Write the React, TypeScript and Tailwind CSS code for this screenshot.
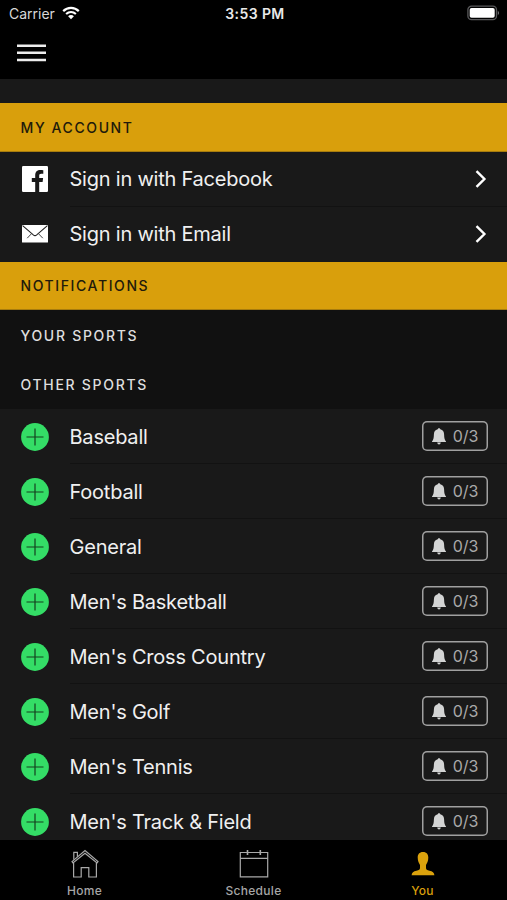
import { ReactNode } from "react";

const sports = [
  "Baseball",
  "Football",
  "General",
  "Men's Basketball",
  "Men's Cross Country",
  "Men's Golf",
  "Men's Tennis",
  "Men's Track & Field",
];

const WifiIcon = () => (
  <svg width="18" height="14" viewBox="0 0 18 14" fill="none">
    <path d="M1.2 5.1C5.6 .7 12.4 .7 16.8 5.1" stroke="#fff" strokeWidth="2.2" />
    <path d="M4.1 8.1C7 5.4 11 5.4 13.9 8.1" stroke="#fff" strokeWidth="2.1" />
    <path d="M6.1 10.3C7.7 8.7 10.3 8.7 11.9 10.3L9 13.2Z" fill="#fff" />
  </svg>
);

const BatteryIcon = () => (
  <svg width="33" height="16" viewBox="0 0 33 16" fill="none">
    <rect x=".9" y="1.2" width="28.6" height="13.4" rx="3.6" stroke="#58585a" strokeWidth="1.3" />
    <rect x="2.7" y="3" width="25" height="9.8" rx="1.8" fill="#fff" />
    <path d="M30.8 5.7C32.4 6.5 32.4 9.3 30.8 10.1Z" fill="#77777a" />
  </svg>
);

const MenuIcon = () => (
  <svg width="29" height="18" viewBox="0 0 29 18" stroke="#ededed" strokeWidth="2.5">
    <path d="M0 1.7H29M0 8.8H29M0 16H29" />
  </svg>
);

const FacebookIcon = () => (
  <svg width="28" height="28" viewBox="0 0 28 28">
    <rect x="1" y="1" width="26" height="26" rx="1.2" fill="#fff" />
    <path
      d="M14.2 27V17H10.8V13.1H14.2V10.2C14.2 6.8 16.3 5 19.3 5C20.7 5 21.8 5.1 22.3 5.2V8.7H20.2C18.5 8.7 18.2 9.5 18.2 10.7V13.1H22.1L21.6 17H18.2V27Z"
      fill="#191919"
    />
  </svg>
);

const MailIcon = () => (
  <svg width="28" height="20" viewBox="0 0 28 20" fill="none">
    <rect x="1" y="1" width="26" height="17.6" rx=".6" fill="#fff" />
    <path d="M1.6 1.6L12.3 10.9Q14 12.3 15.7 10.9L26.4 1.6" stroke="#222" strokeWidth="1.1" />
    <path d="M6.2 14.2L10.4 9.8M21.8 14.2L17.6 9.8" stroke="#444" strokeWidth="1" />
  </svg>
);

const ChevronIcon = () => (
  <svg width="13" height="18" viewBox="0 0 13 18" fill="none">
    <path d="M1.5 1.2L9.4 9L1.5 16.8" stroke="#fff" strokeWidth="2.4" />
  </svg>
);

const AddIcon = () => (
  <svg width="28" height="28" viewBox="0 0 28 28" fill="none">
    <circle cx="14" cy="14" r="13.9" fill="#34dd66" />
    <path d="M14 5.5V22.5M5.5 14H22.5" stroke="#14401f" strokeWidth="1.2" />
  </svg>
);

const BellIcon = () => (
  <svg width="14" height="17" viewBox="0 0 14 17" fill="#d3d4d4">
    <path d="M7 .2C7.8 .2 8.2 .7 8.3 1.3C10.9 1.9 12 3.9 12.1 6.4C12.2 10.2 12.6 11.7 14 13.5V14H0V13.5C1.4 11.7 1.8 10.2 1.9 6.4C2 3.9 3.1 1.9 5.7 1.3C5.8 .7 6.2 .2 7 .2Z" />
    <path d="M5.2 14.6H8.8C8.6 15.9 7.9 16.5 7 16.5C6.1 16.5 5.4 15.9 5.2 14.6Z" />
  </svg>
);

const HomeIcon = () => (
  <svg width="28" height="30" viewBox="0 0 28 30" fill="none" stroke="#a9a9a9" strokeWidth="1.2">
    <path d="M2.6 14V28H10.2V18.6H17.8V28H25.4V14" />
    <path d="M1 12.6L14 1.6L27 12.6L26 13.9L14 4.3L2 13.9Z" />
    <path d="M2.8 10.7V3.4H6.4V7.8" />
  </svg>
);

const CalendarIcon = () => (
  <svg width="30" height="30" viewBox="0 0 30 30" fill="none" stroke="#a9a9a9" strokeWidth="1.2">
    <path d="M1.3 3.5H28.7V27.9H1.3ZM1.3 9.4H28.7" />
    <path d="M8.5 1V6M21.3 1V6" strokeWidth="1.6" />
  </svg>
);

const UserIcon = () => (
  <svg width="24" height="30" viewBox="0 0 24 30" fill="#dba20d">
    <path d="M12 3C15.7 3 17.3 5.3 17.3 8.6C17.3 12.1 16 14.4 15 16V19C15 20.6 16 21 18.5 21.7C21.6 22.5 23.2 23.2 23.4 26.2H.6C.8 23.2 2.4 22.5 5.5 21.7C8 21 9 20.6 9 19V16C8 14.4 6.7 12.1 6.7 8.6C6.7 5.3 8.3 3 12 3Z" />
  </svg>
);

const SectionHeader = ({ title }: { title: string }) => (
  <h2 className="flex h-[48.5px] shrink-0 items-center border-b border-[#a77c0e] bg-[#d99f0c] px-[20.5px] pt-px text-[14px] font-medium tracking-[1.6px] text-[#211a0b]">
    {title}
  </h2>
);

const SubHeader = ({ title }: { title: string }) => (
  <h3 className="flex h-[49.5px] shrink-0 items-center bg-[#111] px-[20.5px] pt-px text-[14px] font-medium tracking-[1.7px] text-[#dedede]">
    {title}
  </h3>
);

const Row = ({
  icon,
  label,
  last,
  children,
}: {
  icon: ReactNode;
  label: string;
  last?: boolean;
  children: ReactNode;
}) => (
  <li className="flex h-[55px] shrink-0 pl-[21px]">
    <div className="flex w-[48.5px] shrink-0 items-center">{icon}</div>
    <div
      className={`flex flex-1 items-center justify-between pr-[19px] ${last ? "" : "border-b border-[#121212]"}`}
    >
      <span className={`text-[20px] tracking-[-0.22px] text-[#f0f0f0] ${last ? "" : "pt-px"}`}>
        {label}
      </span>
      {children}
    </div>
  </li>
);

const Badge = () => (
  <span className="flex h-[30px] w-[66px] items-center justify-between rounded-[5px] px-[9.5px] text-[16px] text-[#a9a9a9] shadow-[inset_0_0_0_1.5px_#a0a0a0]">
    <BellIcon />
    <span>0/3</span>
  </span>
);

const Tab = ({ icon, label, active }: { icon: ReactNode; label: string; active?: boolean }) => (
  <div className="flex flex-1 flex-col items-center pt-[9px]">
    {icon}
    <span
      className={`mt-[4px] text-[12px] leading-4 font-medium tracking-[0.3px] ${active ? "text-[#d99f0c]" : "text-[#a6a6a6]"}`}
    >
      {label}
    </span>
  </div>
);

export default function App() {
  return (
    <div className="flex h-[900px] w-[507px] flex-col overflow-hidden bg-[#191919] font-['Inter',sans-serif]">
      <header className="h-[79px] shrink-0 bg-black">
        <div className="grid h-[26px] grid-cols-3 items-center pr-[7px] pl-[9px]">
          <div className="flex items-center gap-[7px] text-[14px] text-[#d8d8d8]">
            <span>Carrier</span>
            <WifiIcon />
          </div>
          <span className="pl-px text-center text-[14px] font-semibold tracking-[0.4px] text-[#e8e8e8]">
            3:53 PM
          </span>
          <div className="flex justify-end">
            <BatteryIcon />
          </div>
        </div>
        <button className="mt-[18px] ml-[17px] block" aria-label="Menu">
          <MenuIcon />
        </button>
      </header>

      <main className="flex min-h-0 flex-1 flex-col overflow-hidden pt-6">
        <SectionHeader title="MY ACCOUNT" />
        <ul>
          <Row icon={<FacebookIcon />} label="Sign in with Facebook">
            <ChevronIcon />
          </Row>
          <Row icon={<MailIcon />} label="Sign in with Email" last>
            <ChevronIcon />
          </Row>
        </ul>
        <SectionHeader title="NOTIFICATIONS" />
        <SubHeader title="YOUR SPORTS" />
        <SubHeader title="OTHER SPORTS" />
        <ul>
          {sports.map((sport) => (
            <Row key={sport} icon={<AddIcon />} label={sport}>
              <Badge />
            </Row>
          ))}
        </ul>
      </main>

      <nav className="flex h-[60px] shrink-0 bg-black">
        <Tab icon={<HomeIcon />} label="Home" />
        <Tab icon={<CalendarIcon />} label="Schedule" />
        <Tab icon={<UserIcon />} label="You" active />
      </nav>
    </div>
  );
}
